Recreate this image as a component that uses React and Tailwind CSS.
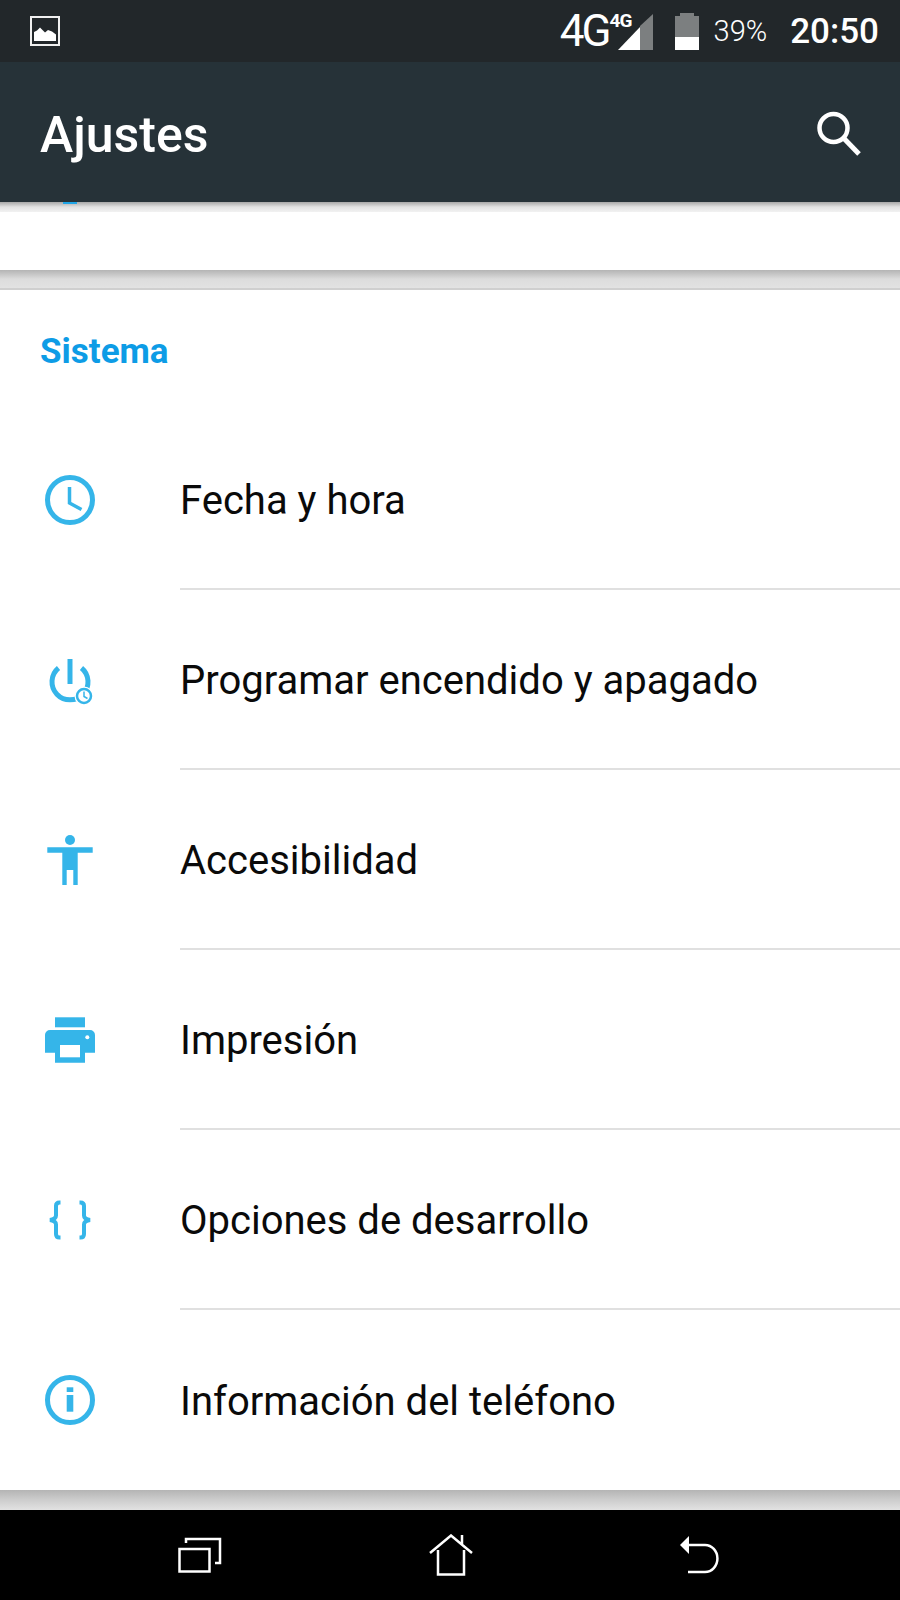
const items = [
  { label: 'Fecha y hora', icon: ClockIcon },
  { label: 'Programar encendido y apagado', icon: PowerIcon },
  { label: 'Accesibilidad', icon: AccessIcon },
  { label: 'Impresión', icon: PrinterIcon },
  { label: 'Opciones de desarrollo', icon: BracesIcon },
  { label: 'Información del teléfono', icon: InfoIcon },
]

const blue = '#35b5e9'

function ClockIcon() {
  return (
    <svg width="60" height="60" viewBox="0 0 60 60" fill="none" stroke={blue}>
      <circle cx="30" cy="30" r="22.5" strokeWidth="5" />
      <path d="M29.5 17v16l12 6.500" strokeWidth="3.500" />
    </svg>
  )
}

function PowerIcon() {
  return (
    <svg width="60" height="60" viewBox="0 0 60 60" fill="none" stroke={blue}>
      <path d="M18.500 18a18 18 0 1 0 23 0" strokeWidth="5" />
      <path d="M30 9v25" strokeWidth="5" />
      <circle cx="44" cy="46" r="9.500" fill="#fff" stroke="none" />
      <circle cx="44" cy="46" r="7" strokeWidth="2.500" />
      <path d="M44 41.500v5l3.500 2" strokeWidth="1.500" />
    </svg>
  )
}

function AccessIcon() {
  return (
    <svg width="60" height="60" viewBox="0 0 60 60" fill={blue}>
      <circle cx="30" cy="10" r="5" />
      <path d="M7.300 17.300h45.400v5.400H37.700V55h-4.400V40h-6.600v15h-4.400V22.700H7.300z" />
    </svg>
  )
}

function PrinterIcon() {
  return (
    <svg width="60" height="60" viewBox="0 0 60 60" fill={blue}>
      <rect x="15" y="7.300" width="30" height="10" />
      <path d="M10 20h40a5 5 0 0 1 5 5v17.700H45v10H15v-10H5V25a5 5 0 0 1 5-5z" />
      <rect x="20" y="35" width="20" height="12.300" fill="#fff" />
      <circle cx="47.300" cy="27.300" r="2" fill="#fff" />
    </svg>
  )
}

function BracesIcon() {
  return (
    <svg width="60" height="60" viewBox="0 0 60 60" fill="none" stroke={blue} strokeWidth="4">
      <path d="M20.500 12.500h-1q-3.500 0-3.500 3.500v9.500q0 3.500-6 4.500q6 1 6 4.500V44q0 3.500 3.500 3.500h1" />
      <path d="M39.500 12.500h1q3.500 0 3.500 3.500v9.500q0 3.500 6 4.500q-6 1-6 4.500V44q0 3.500-3.500 3.500h-1" />
    </svg>
  )
}

function InfoIcon() {
  return (
    <svg width="60" height="60" viewBox="0 0 60 60" fill="none" stroke={blue}>
      <circle cx="30" cy="30" r="22.500" strokeWidth="5" />
      <rect x="26.700" y="17.300" width="6.600" height="4.700" fill={blue} stroke="none" />
      <rect x="26.700" y="25" width="6.600" height="16.700" fill={blue} stroke="none" />
    </svg>
  )
}

function StatusBar() {
  return (
    <div className="h-[62px] bg-[#22272a] flex items-center text-white pl-[30px]">
      <svg width="30" height="30" viewBox="0 0 30 30" fill="#fff" className="shrink-0">
        <rect x="1" y="1" width="28" height="28" fill="none" stroke="#f0f0f0" strokeWidth="2" />
        <path d="M4 25v-9l3-1.500 3-3 3 3 2 2 3-2.500 4 1.500 4 3v6.500z" />
      </svg>
      <div className="flex items-center ml-auto pr-[21px]">
        <span className="text-[44px] tracking-[-3px] leading-none">4G</span>
        <div className="relative w-[44px] h-[40px] ml-[1px]">
          <svg width="36" height="37" viewBox="0 0 36 37" className="absolute left-[8px] top-[3px]">
            <path d="M35 0v36H22V12z" fill="#7c7f80" />
            <path d="M0 36 L22 13 V36z" fill="#fff" />
          </svg>
          <span className="absolute left-0 top-[0px] text-[19px] font-bold leading-none tracking-[-1px]">4G</span>
        </div>
        <div className="w-[24px] h-[37px] ml-[21px] flex flex-col">
          <div className="h-[3px] w-[14px] mx-auto bg-[#7c7f80]" />
          <div className="h-[21px] bg-[#7c7f80]" />
          <div className="h-[13px] bg-white" />
        </div>
        <span className="text-[29px] font-light leading-none ml-[15px]">39%</span>
        <span className="text-[35px] font-medium leading-none ml-[23px]">20:50</span>
      </div>
    </div>
  )
}

function AppBar() {
  return (
    <div className="h-[140px] bg-[#263238] flex items-center justify-between pl-[40px] pr-[36px]">
      <span className="text-white text-[50px] font-medium leading-none pt-[6px]">Ajustes</span>
      <svg width="52" height="52" viewBox="0 0 52 52" fill="none" stroke="#fff" strokeWidth="4.500">
        <circle cx="21.500" cy="22" r="14" />
        <path d="M31.500 32 47 48" strokeWidth="5" />
      </svg>
    </div>
  )
}

function Row({ label, icon: Icon, last }) {
  return (
    <div className="h-[180px] flex pl-[40px]">
      <div className="h-[180px] w-[140px] flex items-center shrink-0">
        <div className="w-[60px] h-[60px]"><Icon /></div>
      </div>
      <div className={'flex-1 flex items-center pt-[4px] ' + (last ? '' : 'border-b-2 border-[#e0e0e0]')}>
        <span className="text-[40px] leading-none text-[#0a0a0a]">{label}</span>
      </div>
    </div>
  )
}

function NavBar() {
  return (
    <div className="h-[90px] bg-black flex items-center justify-between pl-[178px] pr-[180px]">
      <svg width="44" height="36" viewBox="0 0 44 36" fill="none" stroke="#fff" strokeWidth="2.500">
        <rect x="1.500" y="12" width="30" height="22.500" />
        <path d="M8 6V2h34v24h-5" />
      </svg>
      <svg width="44" height="42" viewBox="0 0 44 42" fill="none" stroke="#fff" strokeWidth="2.500">
        <path d="M1 19 22 1.500 43 19M33 1v10M9 16v24.500h26V16" />
      </svg>
      <svg width="40" height="38" viewBox="0 0 40 38" fill="none" stroke="#fff">
        <path d="M0 9 9 0v18z" fill="#fff" stroke="none" />
        <path d="M8 9h17a11.500 12.500 0 0 1 0 27H8" strokeWidth="2.500" />
      </svg>
    </div>
  )
}

export default function App() {
  return (
    <div className="w-[900px] h-[1600px] flex flex-col bg-white font-['Roboto',sans-serif]">
      <StatusBar />
      <AppBar />
      <div className="h-[10px] bg-gradient-to-b from-[#a8a8a8] via-[#e2e2e2] to-[#f2f2f2]">
        <div className="ml-[63px] w-[14px] h-[2px] bg-[#1fa5e6]" />
      </div>
      <div className="h-[58px] bg-white" />
      <div className="h-[20px] bg-gradient-to-b from-[#b4b4b4] via-[#dcdcdc] to-[#e2e2e2] border-b-2 border-[#cfcfcf]" />
      <div className="h-[120px] pl-[40px] pt-[44px]">
        <span className="block text-[35px] leading-[36px] font-bold text-[#0d9ce6]">Sistema</span>
      </div>
      {items.map((item, i) => (
        <Row key={item.label} label={item.label} icon={item.icon} last={i === items.length - 1} />
      ))}
      <div className="flex-1 bg-gradient-to-b from-[#b4b4b4] via-[#cdcdcd] to-[#e2e2e2]" />
      <NavBar />
    </div>
  )
}
